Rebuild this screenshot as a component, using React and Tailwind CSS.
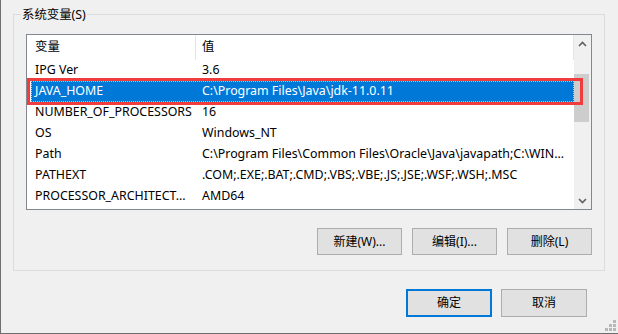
import React from "react";

const rows = [
    { name: "IPG Ver", value: "3.6" },
    { name: "JAVA_HOME", value: "C:\\Program Files\\Java\\jdk-11.0.11", selected: true },
    { name: "NUMBER_OF_PROCESSORS", value: "16" },
    { name: "OS", value: "Windows_NT" },
    { name: "Path", value: "C:\\Program Files\\Common Files\\Oracle\\Java\\javapath;C:\\WIN..." },
    { name: "PATHEXT", value: ".COM;.EXE;.BAT;.CMD;.VBS;.VBE;.JS;.JSE;.WSF;.WSH;.MSC" },
    { name: "PROCESSOR_ARCHITECT...", value: "AMD64" },
];

function Chevron({ up }) {
    return (
        <svg width="9" height="6" viewBox="0 0 9 6">
            <polyline
                points={up ? "1,5 4.5,1.5 8,5" : "1,1 4.5,4.5 8,1"}
                fill="none"
                stroke="#606060"
                strokeWidth="1.6"
            />
        </svg>
    );
}

function WinButton({ children, primary, small }) {
    return (
        <button
            type="button"
            className={`bg-[#e1e1e1] text-[12px] text-black flex items-center justify-center ${small ? "w-[85px] h-[27px]" : "w-[86px] h-[28px]"} ${primary ? "border-2 border-[#0078d7]" : "border border-[#adadad]"}`}
        >
            {children}
        </button>
    );
}

export default function App() {
    return (
        <div
            className="relative w-[618px] h-[334px] bg-[#f0f0f0] border-l border-b border-[#6e6e6e] flex flex-col overflow-hidden text-[12.4px] text-black"
            style={{ fontFamily: '"Noto Sans", "Noto Sans CJK SC", sans-serif' }}
        >
            <fieldset className="ml-[12px] mt-[6px] w-[592px] h-[265px] border border-[#dcdcdc] px-0">
                <legend className="ml-[7px] px-[1px] leading-[17px]">系统变量(S)</legend>
                <div className="px-[12px] flex flex-col">
                    <div className="relative mt-[11px] h-[176px] border border-[#828790] bg-white flex">
                        <div className="flex-1 flex flex-col">
                            <div className="h-[25px] flex items-center">
                                <div className="w-[169px] h-full pl-[8px] flex items-center border-r border-[#e5e5e5]">变量</div>
                                <div className="flex-1 h-full pl-[6px] flex items-center border-r border-[#e5e5e5]">值</div>
                            </div>
                            {rows.map((r) =>
                                r.selected ? (
                                    <div
                                        key={r.name}
                                        className="h-[21px] ml-[4px] flex items-center whitespace-nowrap bg-[#0078d7] text-white border border-dotted border-[#f3c16a]"
                                    >
                                        <div className="w-[164px] pl-[3px]">{r.name}</div>
                                        <div className="pl-[6px]">{r.value}</div>
                                    </div>
                                ) : (
                                    <div key={r.name} className="h-[21px] flex items-center whitespace-nowrap">
                                        <div className="w-[169px] pl-[8px]">{r.name}</div>
                                        <div className="pl-[6px]">{r.value}</div>
                                    </div>
                                )
                            )}
                        </div>
                        <div className="w-[17px] bg-[#f0f0f0] flex flex-col items-center">
                            <div className="h-[17px] w-full flex items-center justify-center">
                                <Chevron up />
                            </div>
                            <div className="flex-1 w-full">
                                <div className="mt-[22px] h-[48px] w-[15px] bg-[#cdcdcd]" />
                            </div>
                            <div className="h-[17px] w-full flex items-center justify-center">
                                <Chevron />
                            </div>
                        </div>
                        <div className="absolute left-0 top-[43px] w-[556px] h-[27px] border-[3px] border-[#f03c3c]" />
                    </div>
                    <div className="mt-[18px] flex justify-end gap-[10px]">
                        <WinButton small>新建(W)...</WinButton>
                        <WinButton small>编辑(I)...</WinButton>
                        <WinButton small>删除(L)</WinButton>
                    </div>
                </div>
            </fieldset>
            <div className="mt-[18px] mr-[31px] flex justify-end gap-[9px]">
                <WinButton primary>确定</WinButton>
                <WinButton>取消</WinButton>
            </div>
            <div className="absolute right-[2px] bottom-[2px] grid grid-cols-3 gap-[1px] w-[11px]">
                <span className="w-[3px] h-[3px]" />
                <span className="w-[3px] h-[3px]" />
                <span className="w-[3px] h-[3px] bg-[#b8b8b8]" />
                <span className="w-[3px] h-[3px]" />
                <span className="w-[3px] h-[3px] bg-[#b8b8b8]" />
                <span className="w-[3px] h-[3px] bg-[#b8b8b8]" />
                <span className="w-[3px] h-[3px] bg-[#b8b8b8]" />
                <span className="w-[3px] h-[3px] bg-[#b8b8b8]" />
                <span className="w-[3px] h-[3px] bg-[#b8b8b8]" />
            </div>
        </div>
    );
}
